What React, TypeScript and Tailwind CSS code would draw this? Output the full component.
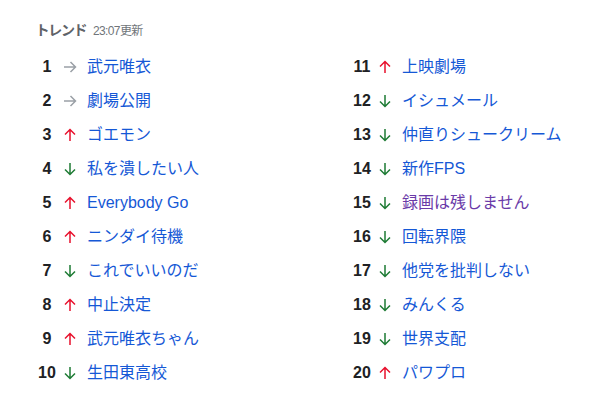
type Trend = {
  rank: number;
  dir: 'up' | 'down' | 'flat';
  word: string;
  visited?: boolean;
};

const trends: Trend[] = [
  { rank: 1, dir: 'flat', word: '武元唯衣' },
  { rank: 2, dir: 'flat', word: '劇場公開' },
  { rank: 3, dir: 'up', word: 'ゴエモン' },
  { rank: 4, dir: 'down', word: '私を潰したい人' },
  { rank: 5, dir: 'up', word: 'Everybody Go' },
  { rank: 6, dir: 'up', word: 'ニンダイ待機' },
  { rank: 7, dir: 'down', word: 'これでいいのだ' },
  { rank: 8, dir: 'up', word: '中止決定' },
  { rank: 9, dir: 'up', word: '武元唯衣ちゃん' },
  { rank: 10, dir: 'down', word: '生田東高校' },
  { rank: 11, dir: 'up', word: '上映劇場' },
  { rank: 12, dir: 'down', word: 'イシュメール' },
  { rank: 13, dir: 'down', word: '仲直りシュークリーム' },
  { rank: 14, dir: 'down', word: '新作FPS' },
  { rank: 15, dir: 'down', word: '録画は残しません', visited: true },
  { rank: 16, dir: 'down', word: '回転界隈' },
  { rank: 17, dir: 'down', word: '他党を批判しない' },
  { rank: 18, dir: 'down', word: 'みんくる' },
  { rank: 19, dir: 'down', word: '世界支配' },
  { rank: 20, dir: 'up', word: 'パワプロ' },
];

function Arrow({ dir }: { dir: Trend['dir'] }) {
  if (dir === 'flat') {
    return (
      <svg width="14" height="14" viewBox="0 0 14 14" className="text-[#9aa0a6]">
        <path d="M1 7h11.5M7.5 2l5 5-5 5" fill="none" stroke="currentColor" strokeWidth="1.5" />
      </svg>
    );
  }
  const up = dir === 'up';
  return (
    <svg
      width="14"
      height="14"
      viewBox="0 0 14 14"
      className={up ? 'text-[#e8112d]' : 'text-[#1e7b34]'}
    >
      {up ? (
        <path d="M7 13V1.5M2 6.5l5-5 5 5" fill="none" stroke="currentColor" strokeWidth="1.5" />
      ) : (
        <path d="M7 1v11.5M2 7.5l5 5 5-5" fill="none" stroke="currentColor" strokeWidth="1.5" />
      )}
    </svg>
  );
}

function TrendRow({ item }: { item: Trend }) {
  return (
    <li className="flex h-[34px] items-center">
      <span className="w-[20px] text-center text-[16px] font-bold text-[#202124]">{item.rank}</span>
      <span className="ml-[6px] flex w-[14px] justify-center">
        <Arrow dir={item.dir} />
      </span>
      <a
        href="#"
        className={`ml-[10px] text-[16px] ${item.visited ? 'text-[#6a3aa8]' : 'text-[#1558d6]'}`}
      >
        {item.word}
      </a>
    </li>
  );
}

export default function App() {
  const left = trends.slice(0, 10);
  const right = trends.slice(10);

  return (
    <div
      className="h-[405px] w-[603px] bg-white pl-[37px] pt-[20px]"
      style={{ fontFamily: '"Liberation Sans", "Noto Sans CJK JP", sans-serif' }}
    >
      <div className="flex h-[20px] items-baseline gap-[6px]">
        <h2 className="text-[14px] font-bold text-[#5f6368] [font-feature-settings:'palt']">トレンド</h2>
        <span className="text-[12px] tracking-[-0.6px] text-[#70757a]">23:07更新</span>
      </div>
      <div className="mt-[10px] grid grid-cols-[315px_1fr]">
        <ul>
          {left.map((item) => (
            <TrendRow key={item.rank} item={item} />
          ))}
        </ul>
        <ul>
          {right.map((item) => (
            <TrendRow key={item.rank} item={item} />
          ))}
        </ul>
      </div>
    </div>
  );
}
